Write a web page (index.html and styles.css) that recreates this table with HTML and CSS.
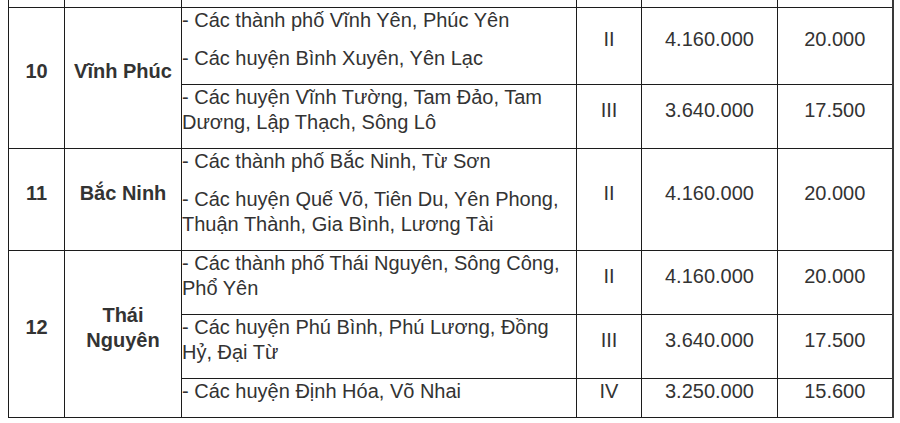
FILE: index.html
```html
<!DOCTYPE html>
<html lang="vi">
<head>
<meta charset="utf-8">
<title>Mức lương tối thiểu vùng</title>
<link rel="stylesheet" href="styles.css">
</head>
<body>
<table class="wage-table">
  <colgroup>
    <col class="c-stt">
    <col class="c-prov">
    <col class="c-area">
    <col class="c-zone">
    <col class="c-wage">
    <col class="c-hour">
  </colgroup>
  <tbody>
    <tr class="cut">
      <td></td><td></td><td></td><td></td><td></td><td></td>
    </tr>
    <tr>
      <td class="stt" rowspan="2"><p>10</p></td>
      <td class="prov" rowspan="2"><p>Vĩnh Phúc</p></td>
      <td class="area"><p>- Các thành phố Vĩnh Yên, Phúc Yên</p><p>- Các huyện Bình Xuyên, Yên Lạc</p></td>
      <td class="num"><p>II</p></td>
      <td class="num"><p>4.160.000</p></td>
      <td class="num"><p>20.000</p></td>
    </tr>
    <tr>
      <td class="area"><p>- Các huyện Vĩnh Tường, Tam Đảo, Tam<br>Dương, Lập Thạch, Sông Lô</p></td>
      <td class="num"><p>III</p></td>
      <td class="num"><p>3.640.000</p></td>
      <td class="num"><p>17.500</p></td>
    </tr>
    <tr>
      <td class="stt"><p>11</p></td>
      <td class="prov"><p>Bắc Ninh</p></td>
      <td class="area"><p>- Các thành phố Bắc Ninh, Từ Sơn</p><p>- Các huyện Quế Võ, Tiên Du, Yên Phong,<br>Thuận Thành, Gia Bình, Lương Tài</p></td>
      <td class="num"><p>II</p></td>
      <td class="num"><p>4.160.000</p></td>
      <td class="num"><p>20.000</p></td>
    </tr>
    <tr>
      <td class="stt" rowspan="3"><p>12</p></td>
      <td class="prov" rowspan="3"><p>Thái<br>Nguyên</p></td>
      <td class="area"><p>- Các thành phố Thái Nguyên, Sông Công,<br>Phổ Yên</p></td>
      <td class="num"><p>II</p></td>
      <td class="num"><p>4.160.000</p></td>
      <td class="num"><p>20.000</p></td>
    </tr>
    <tr>
      <td class="area"><p>- Các huyện Phú Bình, Phú Lương, Đồng<br>Hỷ, Đại Từ</p></td>
      <td class="num"><p>III</p></td>
      <td class="num"><p>3.640.000</p></td>
      <td class="num"><p>17.500</p></td>
    </tr>
    <tr>
      <td class="area"><p>- Các huyện Định Hóa, Võ Nhai</p></td>
      <td class="num"><p>IV</p></td>
      <td class="num"><p>3.250.000</p></td>
      <td class="num"><p>15.600</p></td>
    </tr>
  </tbody>
</table>
</body>
</html>
```

FILE: styles.css
```css
html, body {
  margin: 0;
  padding: 0;
  background: #ffffff;
}

body {
  font-family: "Liberation Sans", Arial, Helvetica, sans-serif;
  font-size: 20px;
  line-height: 25px;
  color: #333333;
}

.wage-table {
  margin: 0 0 0 8px;
  width: 884px;
  table-layout: fixed;
  border-collapse: collapse;
}

.c-stt { width: 56px; }
.c-prov { width: 117px; }
.c-area { width: 395px; }
.c-zone { width: 65px; }
.c-wage { width: 136px; }
.c-hour { width: 115px; }

.wage-table td {
  border: 1px solid #1c1c1c;
  padding: 0;
  vertical-align: middle;
}

.wage-table td:last-child {
  border-right: 2px solid #3a3a3a;
}

.wage-table tr:last-child td,
.wage-table td.stt,
.wage-table td[rowspan="3"] {
  border-bottom-width: 1px;
}

.wage-table tr.cut td {
  border-top: none;
  height: 7px;
}

.wage-table p {
  margin: 0 0 13px;
}

.stt,
.prov {
  text-align: center;
  font-weight: bold;
}

.area {
  padding-left: 1px;
  text-align: left;
}

.num {
  text-align: center;
}
```
